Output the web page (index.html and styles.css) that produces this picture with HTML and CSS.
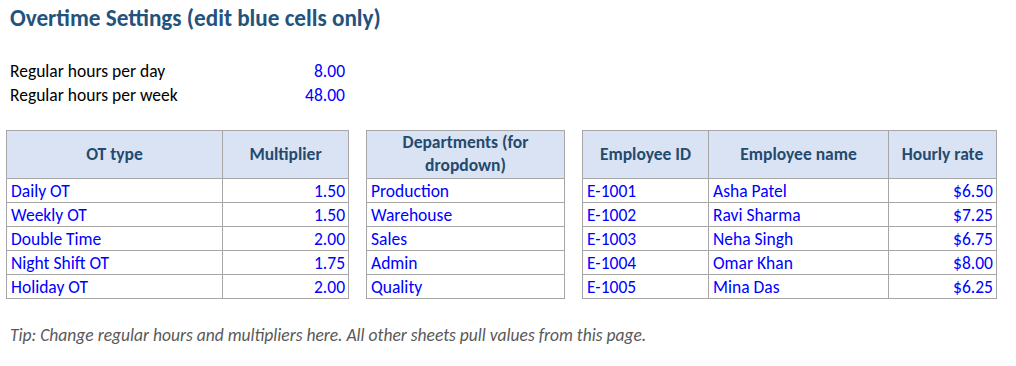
FILE: index.html
```html
<!DOCTYPE html>
<html lang="en">
<head>
<meta charset="utf-8">
<title>Overtime Settings</title>
<link rel="stylesheet" href="styles.css">
</head>
<body>
<div class="sheet">
  <h1 class="title">Overtime Settings (edit blue cells only)</h1>
  <div class="params">
    <div class="param-label">Regular hours per day</div>
    <div class="param-value">8.00</div>
    <div class="param-label">Regular hours per week</div>
    <div class="param-value">48.00</div>
  </div>
  <div class="tables">
    <table class="grid t-ot">
      <colgroup><col class="c-type"><col class="c-mult"></colgroup>
      <thead><tr><th>OT type</th><th>Multiplier</th></tr></thead>
      <tbody>
        <tr><td>Daily OT</td><td class="num">1.50</td></tr>
        <tr><td>Weekly OT</td><td class="num">1.50</td></tr>
        <tr><td>Double Time</td><td class="num">2.00</td></tr>
        <tr><td>Night Shift OT</td><td class="num">1.75</td></tr>
        <tr><td>Holiday OT</td><td class="num">2.00</td></tr>
      </tbody>
    </table>
    <table class="grid t-dept">
      <colgroup><col class="c-dept"></colgroup>
      <thead><tr><th class="two">Departments (for<br>dropdown)</th></tr></thead>
      <tbody>
        <tr><td>Production</td></tr>
        <tr><td>Warehouse</td></tr>
        <tr><td>Sales</td></tr>
        <tr><td>Admin</td></tr>
        <tr><td>Quality</td></tr>
      </tbody>
    </table>
    <table class="grid t-emp">
      <colgroup><col class="c-id"><col class="c-name"><col class="c-rate"></colgroup>
      <thead><tr><th>Employee ID</th><th>Employee name</th><th>Hourly rate</th></tr></thead>
      <tbody>
        <tr><td>E-1001</td><td>Asha Patel</td><td class="num">$6.50</td></tr>
        <tr><td>E-1002</td><td>Ravi Sharma</td><td class="num">$7.25</td></tr>
        <tr><td>E-1003</td><td>Neha Singh</td><td class="num">$6.75</td></tr>
        <tr><td>E-1004</td><td>Omar Khan</td><td class="num">$8.00</td></tr>
        <tr><td>E-1005</td><td>Mina Das</td><td class="num">$6.25</td></tr>
      </tbody>
    </table>
  </div>
  <p class="tip">Tip: Change regular hours and multipliers here. All other sheets pull values from this page.</p>
</div>
</body>
</html>
```
FILE: styles.css
```css
* { box-sizing: border-box; }
html, body { margin: 0; padding: 0; background: #ffffff; }
body {
  font-family: Carlito, "Liberation Sans", Arial, sans-serif;
  font-size: 17.5px;
  color: #000000;
}
.sheet {
  padding: 0 0 0 6px;
  width: 1016px;
}
.title {
  margin: 0;
  padding: 7px 0 0 4px;
  height: 58px;
  line-height: 1;
  font-size: 23.2px;
  font-weight: bold;
  color: #23527c;
}
.params {
  display: grid;
  grid-template-columns: 217px 126px;
  grid-auto-rows: 24px;
  align-items: end;
  line-height: 1;
}
.param-label { padding: 0 0 2px 4px; }
.param-value { text-align: right; padding: 0 4px 2px 0; color: #0000ff; }
.tables {
  display: flex;
  gap: 17px;
  margin-top: 24px;
  align-items: flex-start;
}
.grid {
  border-collapse: separate;
  border-spacing: 0;
  table-layout: fixed;
  border-top: 1px solid #a6a6a6;
  border-left: 1px solid #a6a6a6;
}
.grid th, .grid td {
  border-right: 1px solid #a6a6a6;
  border-bottom: 1px solid #a6a6a6;
  padding: 0 4px;
  white-space: nowrap;
  overflow: hidden;
}
.grid th {
  background: #dae3f3;
  color: #244a6e;
  font-weight: bold;
  text-align: center;
  height: 48px;
  line-height: 24px;
  vertical-align: middle;
  padding-bottom: 2px;
}
.grid th.two {
  line-height: 23px;
  vertical-align: top;
  padding: 0 4px;
}
.grid td {
  color: #0000ff;
  text-align: left;
  height: 24px;
  line-height: 1;
  vertical-align: bottom;
  padding-bottom: 2px;
}
.grid td.num { text-align: right; padding-right: 3px; }
.t-ot { width: 343px; }
.c-type { width: 216px; }
.c-mult { width: 126px; }
.t-dept { width: 199px; }
.c-dept { width: 198px; }
.t-emp { width: 415px; }
.c-id { width: 126px; }
.c-name { width: 180px; }
.c-rate { width: 108px; }
.tip {
  margin: 28px 0 0 0;
  padding-left: 4px;
  font-style: italic;
  color: #595959;
  line-height: 1;
}
```
